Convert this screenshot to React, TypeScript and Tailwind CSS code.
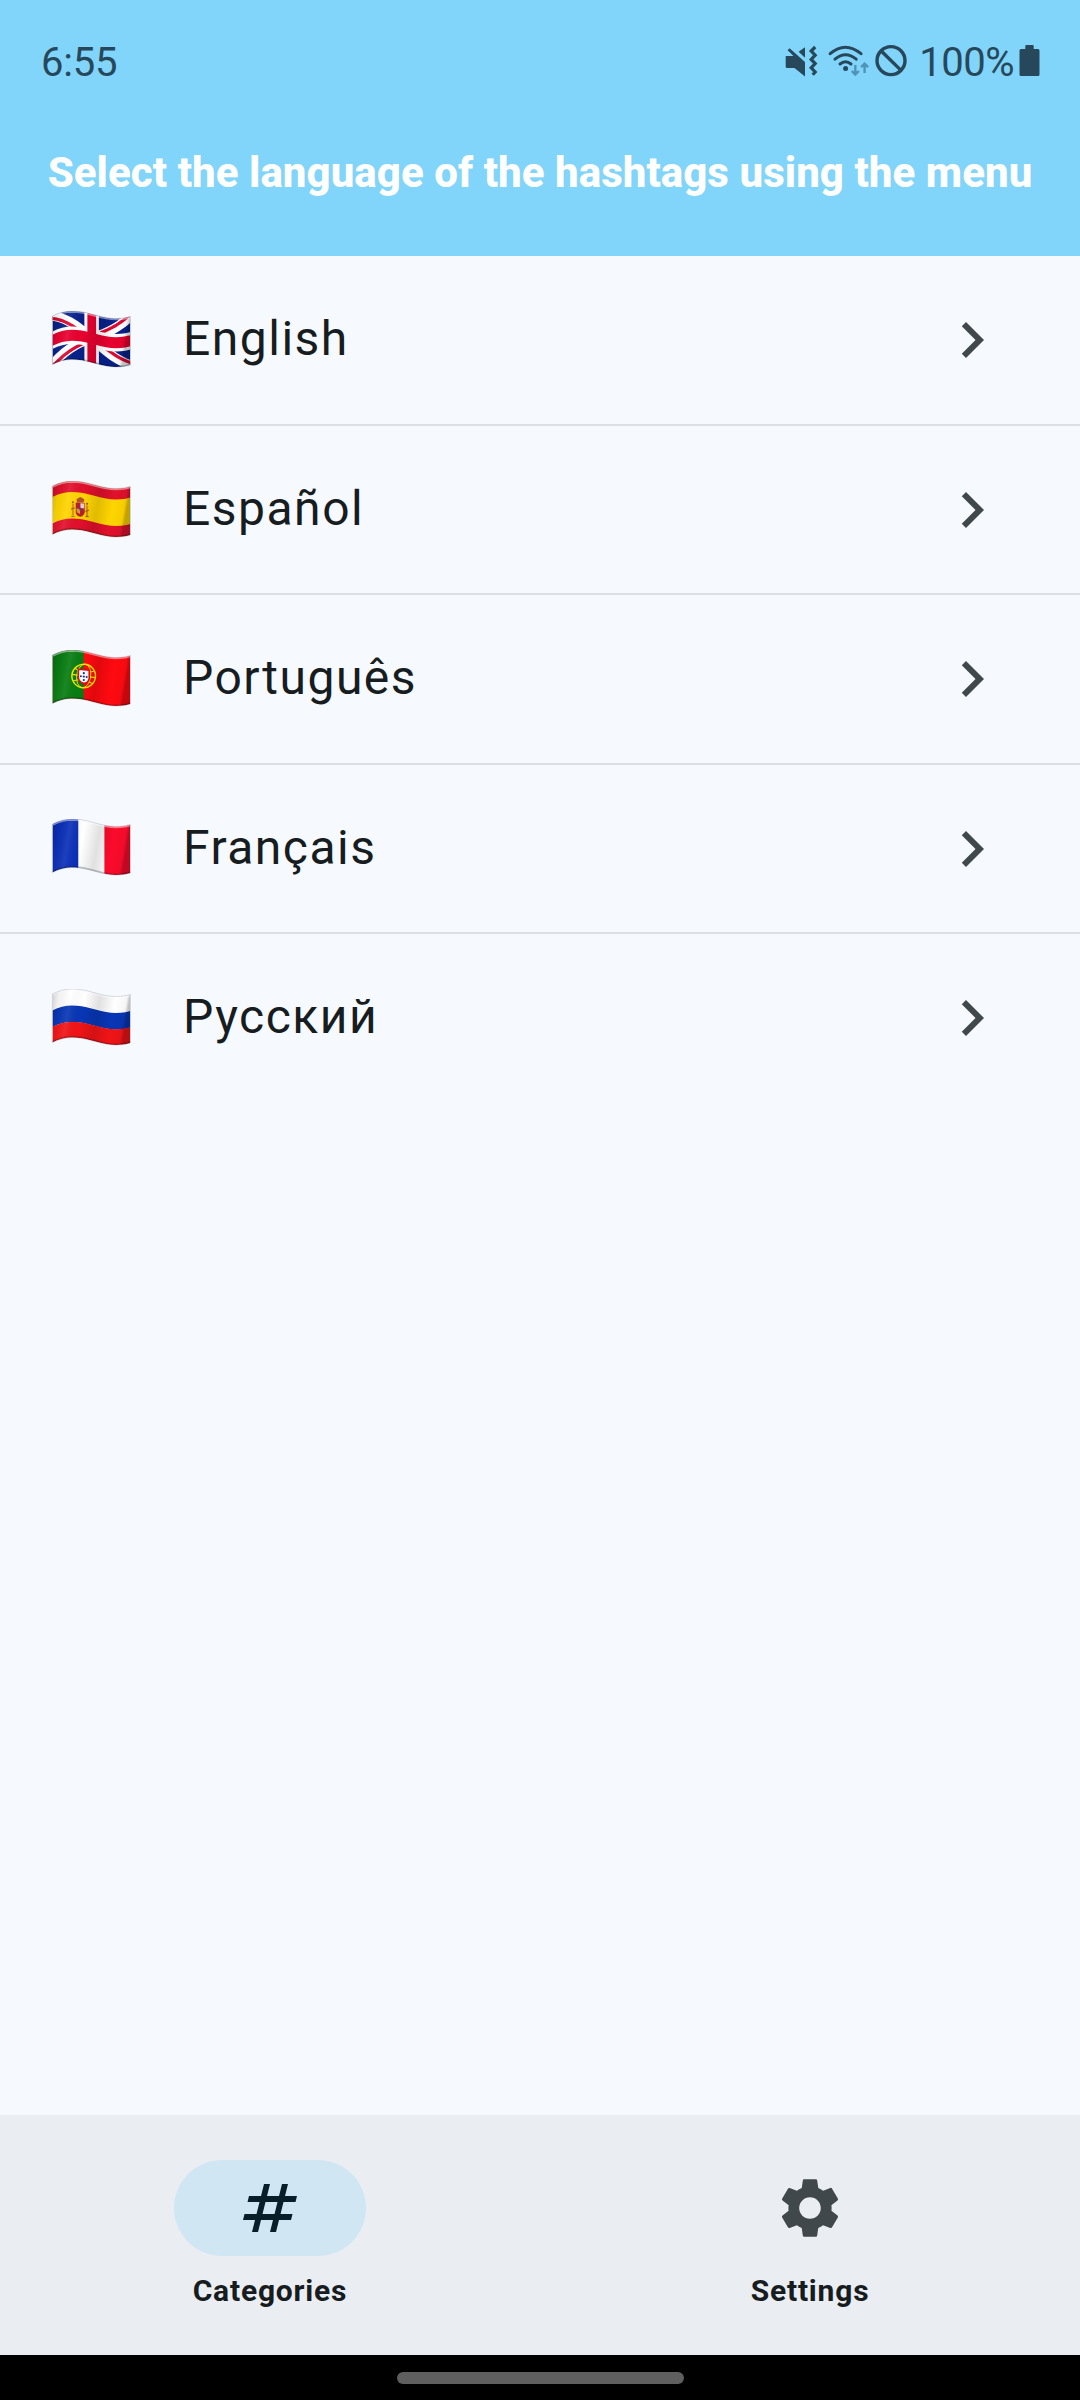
import type { ReactNode } from 'react'
import { MdNavigateNext, MdSettings } from 'react-icons/md'

type Point = [number, number]

const FLAG_WIDTH = 78
const FLAG_HEIGHT = 48.5

// Vertical offset of the waving cloth at a given x
function wave(x: number) {
    if (x < 20) return 5 * Math.pow((20 - x) / 20, 2)
    if (x > 64) return 7.5 - 2 * Math.pow((x - 64) / 14, 2)
    return 3.75 - 3.75 * Math.cos((Math.PI * (x - 20)) / 44)
}

// Bends a flat polyline along the wave
function bend(points: Point[]) {
    const out: string[] = []
    for (let i = 0; i < points.length - 1; i++) {
        const [x0, y0] = points[i]
        const [x1, y1] = points[i + 1]
        for (let s = 0; s <= 16; s++) {
            const x = x0 + ((x1 - x0) * s) / 16
            const y = y0 + ((y1 - y0) * s) / 16
            out.push(`${x.toFixed(2)},${(y + wave(x)).toFixed(2)}`)
        }
    }
    return 'M' + out.join('L')
}

function rect(x0: number, y0: number, x1: number, y1: number) {
    return bend([[x0, y0], [x1, y0], [x1, y1], [x0, y1], [x0, y0]]) + 'Z'
}

const OUTLINE = rect(0, 0, FLAG_WIDTH, FLAG_HEIGHT)

function Flag({ id, children }: { id: string; children: ReactNode }) {
    return (
        <svg className="h-[58px] w-[80px]" viewBox="-1.4 0 80 58">
            <defs>
                <clipPath id={`${id}-clip`}>
                    <path d={OUTLINE} />
                </clipPath>
                <linearGradient id={`${id}-shade`} x1="0" x2="1" y1="0" y2="0.12">
                    <stop offset="0" stopColor="#000" stopOpacity="0.2" />
                    <stop offset="0.1" stopColor="#000" stopOpacity="0.05" />
                    <stop offset="0.24" stopColor="#fff" stopOpacity="0.08" />
                    <stop offset="0.42" stopColor="#000" stopOpacity="0" />
                    <stop offset="0.62" stopColor="#000" stopOpacity="0.12" />
                    <stop offset="0.82" stopColor="#000" stopOpacity="0" />
                    <stop offset="0.96" stopColor="#000" stopOpacity="0.04" />
                    <stop offset="1" stopColor="#000" stopOpacity="0.24" />
                </linearGradient>
            </defs>
            <g clipPath={`url(#${id}-clip)`}>
                {children}
                <path d={OUTLINE} fill={`url(#${id}-shade)`} />
                <path d={bend([[0, 0.5], [FLAG_WIDTH, 0.5]])} fill="none" stroke="#fff" strokeOpacity="0.45" strokeWidth="2.5" />
                <path d={bend([[0, FLAG_HEIGHT], [FLAG_WIDTH, FLAG_HEIGHT]])} fill="none" stroke="#000" strokeOpacity="0.22" strokeWidth="3" />
            </g>
            <path d={OUTLINE} fill="none" stroke="#33405c" strokeOpacity="0.3" strokeWidth="0.6" />
        </svg>
    )
}

function FlagUK() {
    return (
        <Flag id="uk">
            <path d={OUTLINE} fill="#08218a" />
            <g fill="none" stroke="#fff" strokeWidth="9.5">
                <path d={bend([[-4, -2.5], [82, 51]])} />
                <path d={bend([[-4, 51], [82, -2.5]])} />
            </g>
            <g fill="none" stroke="#dc0a32" strokeWidth="3.2">
                <path d={bend([[-3, 0.5], [28, 19.8]])} />
                <path d={bend([[50, 28.7], [81, 48]])} />
                <path d={bend([[48, 16.5], [80, -3.4]])} />
                <path d={bend([[-2, 52], [30, 32]])} />
            </g>
            <path d={rect(0, 15.5, FLAG_WIDTH, 33)} fill="#fff" />
            <path d={rect(32, 0, 46.5, FLAG_HEIGHT)} fill="#fff" />
            <path d={rect(0, 18.7, FLAG_WIDTH, 29.8)} fill="#e8002f" />
            <path d={rect(35, 0, 43.7, FLAG_HEIGHT)} fill="#e8002f" />
        </Flag>
    )
}

function FlagSpain() {
    return (
        <Flag id="es">
            <path d={OUTLINE} fill="#ffd500" />
            <path d={rect(0, 0, FLAG_WIDTH, 11)} fill="#e1102c" />
            <path d={rect(0, 37.5, FLAG_WIDTH, FLAG_HEIGHT)} fill="#e1102c" />
            <g fill="#b5532c">
                <path d="M24 18.5l2-1.6 2-.8 2 .8 2 1.6-.8 3h-6.4z" />
                <path d="M19.5 23h2.2v11h-2.2zM33.5 24.5h2.2v10.5h-2.2z" opacity="0.5" />
                <circle cx="20.5" cy="21.3" r="1.1" />
                <circle cx="34.7" cy="22.8" r="1.1" />
            </g>
            <path d="M23.3 21.5l9 .6v9.4q-1.2 4-4.5 4.3-3.7-.6-4.5-4.6z" fill="#b71f2d" />
            <path d="M28 22.2l3.8.2v5l-3.8-.4z" fill="#e3cdd3" />
            <path d="M23.8 27.5l3.8.4v5l-3-1.4z" fill="#d99a2c" />
            <circle cx="28" cy="28" r="1.3" fill="#47458f" />
            <path d="M18.7 28.2l3.8-1.4M33 30.5l3.6-1.4M19 35.3h3.2M33.2 35.6h3" stroke="#9a3a26" strokeWidth="0.9" />
        </Flag>
    )
}

function FlagPortugal() {
    return (
        <Flag id="pt">
            <path d={OUTLINE} fill="#ff0a10" />
            <path d={rect(0, 0, 31.3, FLAG_HEIGHT)} fill="#087d12" />
            <g transform="rotate(8 31.3 26)" fill="none" stroke="#f6e600">
                <circle cx="31.3" cy="26" r="11.8" strokeWidth="1.5" />
                <ellipse cx="31.3" cy="26" rx="7" ry="11.8" strokeWidth="0.9" />
                <path d="M19.5 26h23.6M21.5 19.5q9.8 5 19.6 0M21.5 32.5q9.8-5 19.6 0" strokeWidth="1.1" />
            </g>
            <path d="M26 19.3l10.8 1v8q-.8 4.8-5.4 5-4.8-.8-5.4-5.6z" fill="#fff" stroke="#e20b1a" strokeWidth="1.5" />
            <g fill="#16338f">
                <circle cx="31.4" cy="23.2" r="1.1" />
                <circle cx="31.4" cy="26.6" r="1.1" />
                <circle cx="31.4" cy="30" r="1.1" />
                <circle cx="28.5" cy="26.2" r="1" />
                <circle cx="34.3" cy="27" r="1" />
            </g>
        </Flag>
    )
}

function FlagFrance() {
    return (
        <Flag id="fr">
            <path d={rect(0, 0, 26.3, FLAG_HEIGHT)} fill="#0b2fb8" />
            <path d={rect(26, 0, 52.3, FLAG_HEIGHT)} fill="#fff" />
            <path d={rect(52, 0, FLAG_WIDTH, FLAG_HEIGHT)} fill="#fb0b2b" />
        </Flag>
    )
}

function FlagRussia() {
    return (
        <Flag id="ru">
            <path d={rect(0, 0, FLAG_WIDTH, 16.7)} fill="#fff" />
            <path d={rect(0, 16.5, FLAG_WIDTH, 33)} fill="#0836b5" />
            <path d={rect(0, 32.8, FLAG_WIDTH, FLAG_HEIGHT)} fill="#f01416" />
        </Flag>
    )
}

const languages = [
    { name: 'English', flag: <FlagUK /> },
    { name: 'Español', flag: <FlagSpain /> },
    { name: 'Português', flag: <FlagPortugal /> },
    { name: 'Français', flag: <FlagFrance /> },
    { name: 'Русский', flag: <FlagRussia /> },
]

function StatusBar() {
    return (
        <div className="flex h-[124px] items-center justify-between pr-[40px] pl-[41px] text-[#27485a]">
            <span className="pt-[2px] text-[40px] leading-none tracking-[-0.2px]">6:55</span>
            <div className="flex items-center">
                <svg className="mb-[2px] h-[36px] w-[34px]" viewBox="0 0 34 36" fill="currentColor">
                    <path d="M1 13h7.5L2.6 7.2l2-2L20 19v14.5L9.5 25H2q-1.3 0-1.3-1.3V14q0-1 .3-1z" />
                    <path d="M13.6 8.8L20 4.2v10.6z" />
                    <path d="M30.2 4l-4 4 4 4.2-4 4.2 4 4.2-4 4.2 4 4.2-2.5 2.8" fill="none" stroke="currentColor" strokeWidth="3.2" />
                </svg>
                <svg className="mb-[2px] ml-[9px] h-[36px] w-[42px]" viewBox="0 0 42 36" fill="none">
                    <g stroke="currentColor" strokeWidth="3" strokeLinecap="round">
                        <path d="M2.2 10.7q15-13 30.8 0" />
                        <path d="M7 16.2q10.5-9 21.2 0" />
                        <path d="M12 21q5.5-4.6 11 0" />
                    </g>
                    <circle cx="17.6" cy="25.6" r="2.5" fill="currentColor" />
                    <g stroke="#4f93b6" strokeWidth="2.4">
                        <path d="M27.3 22v9M23.8 28l3.5 3.6 3.5-3.6" />
                        <path d="M36.6 30v-9M33.1 24.2l3.5-3.6 3.5 3.6" />
                    </g>
                </svg>
                <svg className="mb-[2px] ml-[4px] h-[36px] w-[34px]" viewBox="0 0 34 36" fill="none" stroke="currentColor" strokeWidth="3.4">
                    <circle cx="17" cy="17.6" r="14" />
                    <path d="M7 7.8l20 19.6" />
                </svg>
                <span className="ml-[11px] pt-[2px] text-[40px] leading-none tracking-[-0.5px]">100%</span>
                <svg className="mb-[1px] ml-[5px] h-[36px] w-[21px]" viewBox="0 0 21 36" fill="currentColor">
                    <path d="M6.3 2q0-1 1-1h6.4q1 0 1 1v3H19q1.500 0 1.500 1.500v24q0 1.500-1.500 1.500H2Q.5 32 .5 30.500v-24Q.5 5 2 5h4.300z" />
                </svg>
            </div>
        </div>
    )
}

function HashIcon() {
    return (
        <svg className="size-[72px] text-[#081e28]" viewBox="0 0 24 24" fill="currentColor">
            <path d="M20.5 10l.5-2h-4l1-4h-2l-1 4h-4l1-4h-2L9 8H5l-.5 2h4l-1 4h-4L3 16h4l-1 4h2l1-4h4l-1 4h2l1-4h4l.5-2h-4l1-4h4zm-7 4h-4l1-4h4l-1 4z" />
        </svg>
    )
}

export default function App() {
    return (
        <div className="flex h-[2400px] w-[1080px] flex-col bg-[#f6faff] font-['Roboto',sans-serif]">
            <header className="h-[256px] bg-[#81d4fa]">
                <StatusBar />
                <h1 className="mt-[25px] text-center text-[42px] leading-[48px] font-extrabold tracking-[0.05px] whitespace-nowrap text-white">
                    Select the language of the hashtags using the menu
                </h1>
            </header>

            <main className="flex-grow">
                {languages.map((language) => (
                    <div
                        key={language.name}
                        className="flex h-[169.4px] items-center border-b-2 border-[#dbdfe4] pr-[72px] pl-[51px] first:h-[170px] last:border-transparent"
                    >
                        {language.flag}
                        <span className="mb-[1.2px] ml-[52px] flex-grow text-[48px] leading-[72px] tracking-[1.5px] text-[#171c1f]">
                            {language.name}
                        </span>
                        <MdNavigateNext className="mt-[0.6px] size-[72px] text-[#40484c]" />
                    </div>
                ))}
            </main>

            <nav className="flex h-[240px] bg-[#eaedf2] text-[#171c1f]">
                <div className="flex flex-1 flex-col items-center pt-[45px]">
                    <div className="flex h-[96px] w-[192px] items-center justify-center rounded-full bg-[#d0e6f3]">
                        <HashIcon />
                    </div>
                    <span className="mt-[15px] text-[30px] leading-[40px] font-bold tracking-[0.8px]">Categories</span>
                </div>
                <div className="flex flex-1 flex-col items-center pt-[45px]">
                    <div className="flex h-[96px] w-[192px] items-center justify-center">
                        <MdSettings className="size-[72px] text-[#40484c]" />
                    </div>
                    <span className="mt-[15px] text-[30px] leading-[40px] font-bold tracking-[0.8px]">Settings</span>
                </div>
            </nav>

            <div className="flex h-[45px] items-center justify-center bg-black">
                <div className="h-[12px] w-[287px] rounded-full bg-[#5f5f5f]" />
            </div>
        </div>
    )
}
